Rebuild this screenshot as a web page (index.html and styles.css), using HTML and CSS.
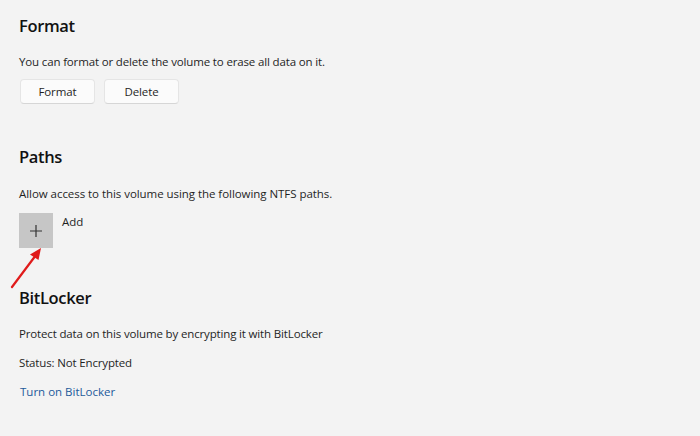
FILE: index.html
```html
<!DOCTYPE html>
<html lang="en">
<head>
  <meta charset="UTF-8" />
  <title>Volume properties</title>
  <link rel="stylesheet" href="styles.css">
</head>
<body>

  <!-- Format -->
  <section class="group group-format">
    <h2>Format</h2>
    <p>You can format or delete the volume to erase all data on it.</p>
    <div class="buttons">
      <button class="btn">Format</button>
      <button class="btn">Delete</button>
    </div>
  </section>

  <!-- Paths -->
  <section class="group group-paths">
    <h2>Paths</h2>
    <p>Allow access to this volume using the following NTFS paths.</p>
    <div class="add-row">
      <button class="add-tile" aria-label="Add">
        <svg width="14" height="14" viewBox="0 0 14 14">
          <path d="M7 1v12M1 7h12" stroke="#333" stroke-width="1.2" fill="none"/>
        </svg>
      </button>
      <span class="add-label">Add</span>
      <svg class="arrow" width="40" height="44" viewBox="0 0 40 44">
        <path d="M2 42L26 10" stroke="#e01b1b" stroke-width="2.2" stroke-linecap="round"/>
        <path d="M31 3L20 9.5L28.5 15Z" fill="#e01b1b"/>
      </svg>
    </div>
  </section>

  <!-- BitLocker -->
  <section class="group group-bitlocker">
    <h2>BitLocker</h2>
    <p>Protect data on this volume by encrypting it with BitLocker</p>
    <p class="status">Status: Not Encrypted</p>
    <a href="#" class="link">Turn on BitLocker</a>
  </section>

</body>
</html>
```

FILE: styles.css
```css
/* Reset and base */
* {
  margin: 0;
  padding: 0;
  box-sizing: border-box;
  font-family: 'Open Sans', 'Noto Sans', sans-serif;
}

body {
  background: #f3f3f3;
  color: #1f1f1f;
  width: 700px;
  height: 436px;
  overflow: hidden;
  padding: 14px 0 0 19px;
}

.group h2 {
  font-size: 16.5px;
  font-weight: 600;
  line-height: 24px;
  letter-spacing: -0.35px;
  color: #111;
}

.group p {
  font-size: 11.5px;
  line-height: 16px;
  margin-top: 16px;
  letter-spacing: -0.15px;
}

/* Format */
.buttons {
  display: flex;
  gap: 9px;
  margin-top: 9px;
  padding-left: 1px;
}

.btn {
  width: 75px;
  height: 25px;
  background: #fbfbfb;
  border: 1px solid #e5e5e5;
  border-bottom-color: #d6d6d6;
  border-radius: 4px;
  font-size: 11.5px;
  letter-spacing: -0.1px;
  color: #1f1f1f;
}

/* Paths */
.group-paths {
  margin-top: 41px;
}

.group-paths p {
  margin-top: 17px;
  letter-spacing: -0.05px;
}

.add-row {
  position: relative;
  display: flex;
  align-items: flex-start;
  gap: 9px;
  margin-top: 11px;
}

.add-tile {
  width: 34px;
  height: 35px;
  background: #c6c6c6;
  border: none;
  display: flex;
  align-items: center;
  justify-content: center;
}

.add-label {
  font-size: 11.5px;
  line-height: 16px;
  margin-top: 1px;
}

.arrow {
  position: absolute;
  left: -9px;
  top: 32px;
}

/* BitLocker */
.group-bitlocker {
  margin-top: 38px;
}

.group-bitlocker .status {
  margin-top: 13px;
}

.link {
  display: block;
  margin-top: 13px;
  font-size: 11.5px;
  line-height: 16px;
  color: #1d5a9b;
  text-decoration: none;
  padding-left: 1px;
}
```
